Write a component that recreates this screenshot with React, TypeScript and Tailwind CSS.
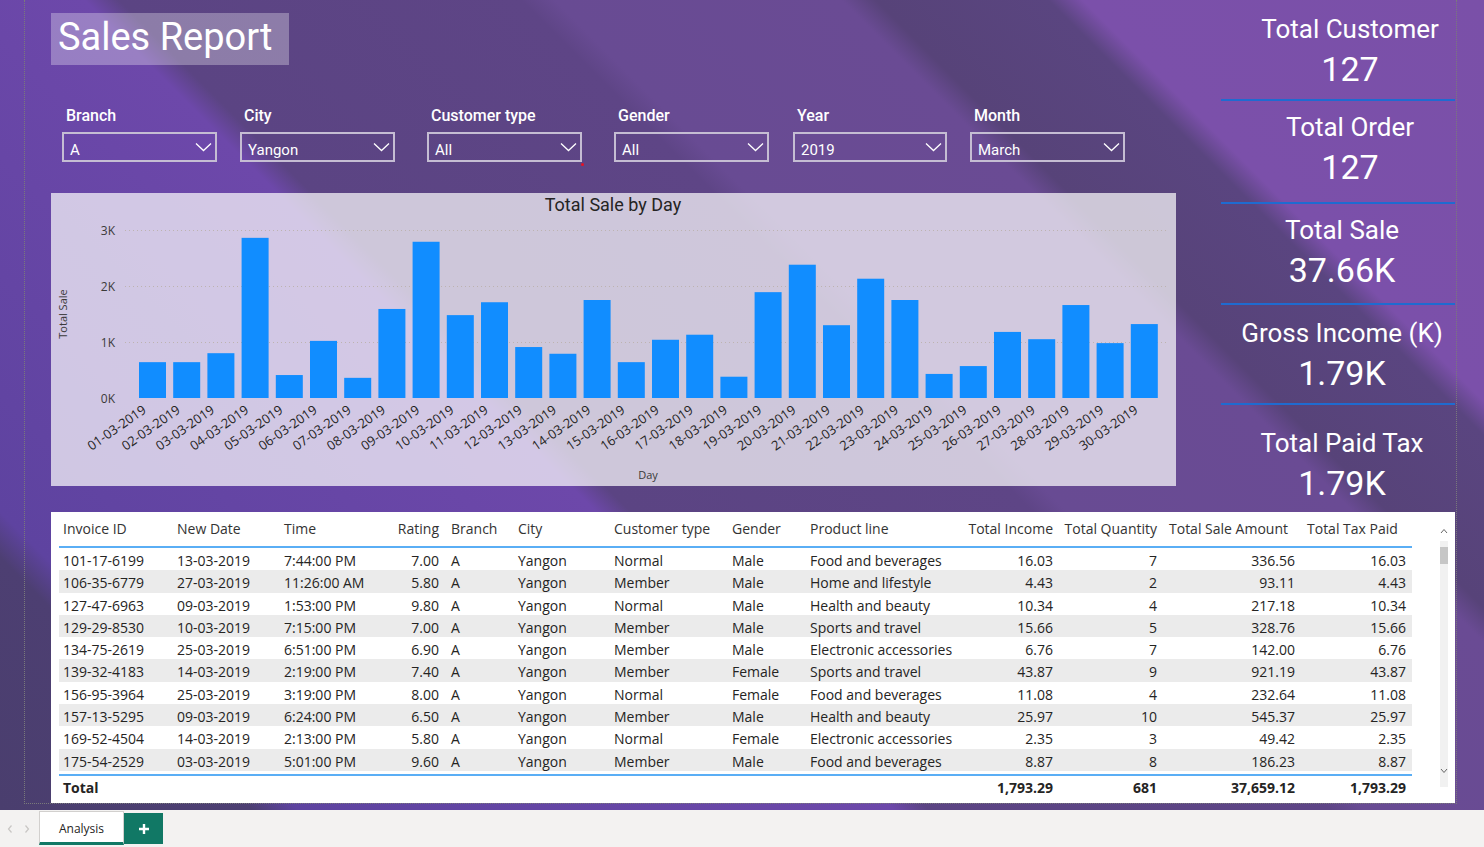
import React from "react";

const bars = [0.64, 0.64, 0.8, 2.86, 0.41, 1.02, 0.36, 1.59, 2.79, 1.48, 1.71, 0.91, 0.79, 1.75, 0.64, 1.04, 1.13, 0.38, 1.89, 2.38, 1.3, 2.13, 1.75, 0.43, 0.57, 1.18, 1.05, 1.66, 0.98, 1.32];
const dates = bars.map((_, i) => `${String(i + 1).padStart(2, "0")}-03-2019`);

const filters = [
  { label: "Branch", value: "A", cls: "ml-[11px] w-[155px]" },
  { label: "City", value: "Yangon", cls: "ml-[23px] w-[155px]" },
  { label: "Customer type", value: "All", cls: "ml-[32px] w-[155px]", dot: true },
  { label: "Gender", value: "All", cls: "ml-[32px] w-[155px]" },
  { label: "Year", value: "2019", cls: "ml-[24px] w-[154px]" },
  { label: "Month", value: "March", cls: "ml-[23px] w-[155px]" },
];

const kpis = [
  { title: "Total Customer", value: "127", cls: "h-[101px] pt-[13px] pl-[24px] border-b-2" },
  { title: "Total Order", value: "127", cls: "h-[103px] pt-[10px] pl-[24px] border-b-2" },
  { title: "Total Sale", value: "37.66K", cls: "h-[101px] pt-[10px] pl-[8px] border-b-2" },
  { title: "Gross Income (K)", value: "1.79K", cls: "h-[100px] pt-[12px] pl-[8px] border-b-2" },
  { title: "Total Paid Tax", value: "1.79K", cls: "pt-[22px] pl-[8px]" },
];

const headers = ["Invoice ID", "New Date", "Time", "Rating", "Branch", "City", "Customer type", "Gender", "Product line", "Total Income", "Total Quantity", "Total Sale Amount", "Total Tax Paid"];
const headCls = ["pl-1", "pl-1", "pl-1", "pr-1 text-right", "pl-2", "pl-1", "pl-1", "pl-1", "pl-1", "pr-1 text-right", "pr-1 text-right", "pl-2", "pl-2"];
const cellCls = ["pl-1", "pl-1", "pl-1", "pr-1 text-right", "pl-2", "pl-1", "pl-1", "pl-1", "pl-1", "pr-1 text-right", "pr-1 text-right", "pr-1 text-right", "pr-[6px] text-right"];

const rows = [
  ["101-17-6199", "13-03-2019", "7:44:00 PM", "7.00", "A", "Yangon", "Normal", "Male", "Food and beverages", "16.03", "7", "336.56", "16.03"],
  ["106-35-6779", "27-03-2019", "11:26:00 AM", "5.80", "A", "Yangon", "Member", "Male", "Home and lifestyle", "4.43", "2", "93.11", "4.43"],
  ["127-47-6963", "09-03-2019", "1:53:00 PM", "9.80", "A", "Yangon", "Normal", "Male", "Health and beauty", "10.34", "4", "217.18", "10.34"],
  ["129-29-8530", "10-03-2019", "7:15:00 PM", "7.00", "A", "Yangon", "Member", "Male", "Sports and travel", "15.66", "5", "328.76", "15.66"],
  ["134-75-2619", "25-03-2019", "6:51:00 PM", "6.90", "A", "Yangon", "Member", "Male", "Electronic accessories", "6.76", "7", "142.00", "6.76"],
  ["139-32-4183", "14-03-2019", "2:19:00 PM", "7.40", "A", "Yangon", "Member", "Female", "Sports and travel", "43.87", "9", "921.19", "43.87"],
  ["156-95-3964", "25-03-2019", "3:19:00 PM", "8.00", "A", "Yangon", "Normal", "Female", "Food and beverages", "11.08", "4", "232.64", "11.08"],
  ["157-13-5295", "09-03-2019", "6:24:00 PM", "6.50", "A", "Yangon", "Member", "Male", "Health and beauty", "25.97", "10", "545.37", "25.97"],
  ["169-52-4504", "14-03-2019", "2:13:00 PM", "5.80", "A", "Yangon", "Normal", "Female", "Electronic accessories", "2.35", "3", "49.42", "2.35"],
  ["175-54-2529", "03-03-2019", "5:01:00 PM", "9.60", "A", "Yangon", "Member", "Male", "Food and beverages", "8.87", "8", "186.23", "8.87"],
];
const totals = ["Total", "", "", "", "", "", "", "", "", "1,793.29", "681", "37,659.12", "1,793.29"];

const gridCols = "grid grid-cols-[114px_107px_112px_51px_71px_96px_118px_78px_155px_96px_104px_138px_113px]";

function Chevron() {
  return (
    <svg width="17" height="10" viewBox="0 0 17 10">
      <polyline points="1,1.5 8.5,8.5 16,1.5" fill="none" stroke="#ffffff" strokeWidth="1.3" />
    </svg>
  );
}

function Chart() {
  const base = 205;
  const unit = 56;
  const font = "'Open Sans', sans-serif";
  return (
    <svg width={1125} height={293} className="block">
      <text x={562} y={18} textAnchor="middle" fontFamily="Roboto, sans-serif" fontSize={18} fill="#252423">
        Total Sale by Day
      </text>
      {[3, 2, 1].map((k) => (
        <line key={k} x1={74} x2={1115} y1={base - unit * k + 0.5} y2={base - unit * k + 0.5} stroke="#bdb3b0" strokeDasharray="1 3" />
      ))}
      {[3, 2, 1, 0].map((k) => (
        <text key={k} x={64} y={base - unit * k + 5} textAnchor="end" fontFamily={font} fontSize={12} fill="#3b3a39">
          {k}K
        </text>
      ))}
      {bars.map((v, i) => {
        const x = 88 + i * 34.2;
        const h = v * unit;
        return <rect key={i} x={x} y={base - h} width={27} height={h} fill="#118dff" />;
      })}
      {dates.map((d, i) => {
        const cx = 88 + i * 34.2 + 13.5;
        return (
          <text key={d} transform={`translate(${cx - 5.5},219) rotate(-35)`} textAnchor="end" fontFamily={font} fontSize={13} fill="#252423">
            {d}
          </text>
        );
      })}
      <text transform="translate(16,121) rotate(-90)" textAnchor="middle" fontFamily={font} fontSize={11} fill="#3b3a39">
        Total Sale
      </text>
      <text x={597} y={286} textAnchor="middle" fontFamily={font} fontSize={11} fill="#3b3a39">
        Day
      </text>
    </svg>
  );
}

export default function App() {
  return (
    <div className="flex h-[847px] w-[1484px] flex-col overflow-hidden">
      <div className="h-[810px] bg-[linear-gradient(45deg,#4a3e6e_0%,#4d3f72_11%,#5e43a0_13%,#6d48aa_39%,#5b4483_40.5%,#5e4586_58%,#684b93_59.5%,#6a4b94_72%,#574379_73.5%,#5a4580_81%,#7b50aa_82.5%,#7a50a8_100%)]">
        <div className="ml-[24px] flex h-[804px] w-[1433px] flex-col border-x border-b border-dotted border-[#7a7a7a]">
          {/* top section */}
          <div className="flex h-[512px]">
            <div className="ml-[26px] flex w-[1125px] flex-col">
              <div className="mt-[13px] h-[52px] w-[238px] bg-white/30 pl-[7px] font-['Roboto',sans-serif] text-[38px] leading-[48px] text-white">
                Sales Report
              </div>
              <div className="mt-[39px] flex font-['Roboto',sans-serif]">
                {filters.map((f) => (
                  <div key={f.label} className={`${f.cls} flex flex-col`}>
                    <div className="h-[24px] pl-1 text-[16px] font-medium leading-[24px] text-white">{f.label}</div>
                    <div className="relative mt-[4px] flex h-[30px] items-center justify-between border-2 border-[#c5bdd3] pl-[6px] pr-[3px]">
                      <span className="pt-[6px] text-[15px] text-white">{f.value}</span>
                      <Chevron />
                      {f.dot && <span className="absolute -bottom-[6px] -right-[4px] h-[3px] w-[3px] rounded-full bg-[#e81123]" />}
                    </div>
                  </div>
                ))}
              </div>
              <div className="mt-[31px] h-[293px] w-[1125px] bg-white/70">
                <Chart />
              </div>
            </div>
            <div className="ml-[44px] flex w-[236px] flex-col font-['Roboto',sans-serif] text-white">
              {kpis.map((k) => (
                <div key={k.title} className={`${k.cls} mx-[1px] flex flex-col items-center border-[#1f6bd0]`}>
                  <div className="text-[26px] leading-[32px]">{k.title}</div>
                  <div className="mt-[4px] text-[34px] leading-[40px]">{k.value}</div>
                </div>
              ))}
            </div>
          </div>
          {/* table */}
          <div className="ml-[26px] flex h-[291px] w-[1404px] bg-white pl-[8px] font-['Open_Sans',sans-serif] text-[14px] text-[#252423]">
            <div className="flex w-[1353px] flex-col">
              <div className={`${gridCols} h-[34px] items-center pb-[1px] text-[#333333]`}>
                {headers.map((h, i) => (
                  <div key={h} className={`${headCls[i]} whitespace-nowrap`}>{h}</div>
                ))}
              </div>
              <div className="h-[2px] bg-[#5aaef5]" />
              {rows.map((r, ri) => (
                <div key={r[0]} className={`${gridCols} h-[22.3px] items-start ${ri % 2 === 1 ? "bg-[#ebebeb]" : "bg-white"}`}>
                  {r.map((c, ci) => (
                    <div key={ci} className={`${cellCls[ci]} whitespace-nowrap pt-[3px] leading-[19px]`}>{c}</div>
                  ))}
                </div>
              ))}
              <div className="mt-[3px] h-[2px] bg-[#5aaef5]" />
              <div className={`${gridCols} h-[24px] items-center font-bold`}>
                {totals.map((c, ci) => (
                  <div key={ci} className={`${cellCls[ci]} whitespace-nowrap`}>{c}</div>
                ))}
              </div>
            </div>
            <div className="ml-[26px] flex w-[12px] flex-col items-center">
              <svg width="8" height="6" viewBox="0 0 8 6" className="mt-[16px]">
                <polyline points="1,5 4,1.5 7,5" fill="none" stroke="#666666" strokeWidth="1" />
              </svg>
              <div className="mt-[7px] flex h-[246px] w-[8px] flex-col bg-[#f1f1f1]">
                <div className="mt-[6px] h-[17px] w-[8px] bg-[#c6c6c6]" />
                <div className="flex-1" />
                <svg width="8" height="6" viewBox="0 0 8 6" className="mb-[13px]">
                  <polyline points="1,1 4,4.5 7,1" fill="none" stroke="#666666" strokeWidth="1" />
                </svg>
              </div>
            </div>
          </div>
        </div>
      </div>
      {/* bottom tab bar */}
      <div className="flex h-[37px] bg-[#f3f2f1] font-['Open_Sans',sans-serif]">
        <div className="flex w-[39px] items-center justify-around pl-[2px] pr-[4px]">
          <svg width="6" height="10" viewBox="0 0 6 10">
            <polyline points="4.5,1.5 1.5,5 4.5,8.5" fill="none" stroke="#c8c6c4" strokeWidth="1.2" />
          </svg>
          <svg width="6" height="10" viewBox="0 0 6 10">
            <polyline points="1.5,1.5 4.5,5 1.5,8.5" fill="none" stroke="#c8c6c4" strokeWidth="1.2" />
          </svg>
        </div>
        <div className="mt-[1px] flex h-[34px] w-[85px] items-center justify-center border-x border-t border-b-[3px] border-x-[#d2d0ce] border-t-[#d2d0ce] border-b-[#117865] bg-white pt-[4px] text-[12px] text-[#252423]">
          Analysis
        </div>
        <div className="mt-[3px] flex h-[31px] w-[39px] items-center justify-center bg-[#117865]">
          <svg width="12" height="12" viewBox="0 0 12 12">
            <path d="M6 1v10M1 6h10" stroke="#ffffff" strokeWidth="2.4" />
          </svg>
        </div>
      </div>
    </div>
  );
}
